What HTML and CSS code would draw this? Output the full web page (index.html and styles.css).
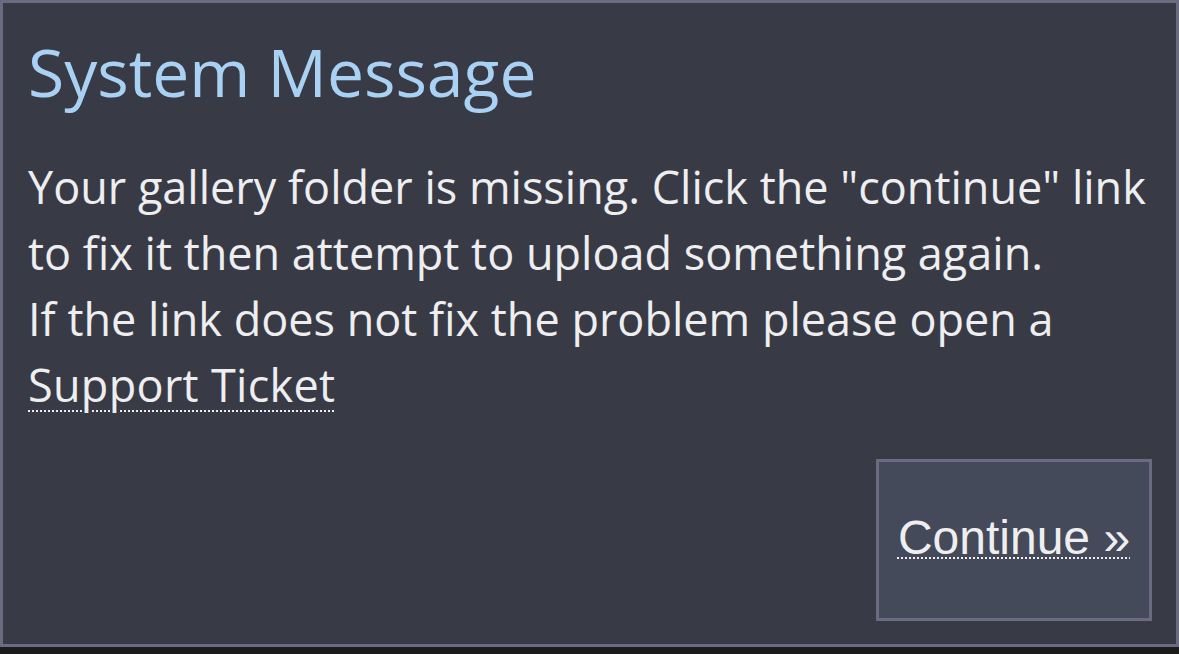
FILE: index.html
```html
<!DOCTYPE html>
<html lang="en">
<head>
<meta charset="utf-8">
<title>System Message</title>
<link rel="stylesheet" href="styles.css">
</head>
<body>
<div class="dialog">
  <h1 class="title">System Message</h1>
  <div class="message">
    Your gallery folder is missing. Click the "continue" link to fix it then attempt to upload something again.<br>
    If the link does not fix the problem please open a <a class="link" href="#">Support Ticket</a>
  </div>
  <div class="actions">
    <div class="button"><a class="button-link" href="#">Continue &raquo;</a></div>
  </div>
</div>
</body>
</html>
```
FILE: styles.css
```css
html, body {
  margin: 0;
  padding: 0;
  background: #1b1b1d;
}

.dialog {
  box-sizing: border-box;
  width: 1179px;
  height: 647px;
  border: 3px solid #6b6a81;
  background: #383b45;
  padding: 22px 24px 23px 25px;
  display: flex;
  flex-direction: column;
  font-family: "Open Sans", "Noto Sans", sans-serif;
  color: #eeeef0;
}

.title {
  margin: 0;
  font-weight: 400;
  font-size: 66px;
  line-height: 1.4;
  color: #a9d1f3;
}

.message {
  margin-top: 37px;
  font-size: 45px;
  line-height: 66px;
}

.link {
  color: #eeeef0;
  text-decoration: underline dotted 2px;
  text-underline-offset: 8px;
  letter-spacing: 0.3px;
}

.actions {
  margin-top: auto;
  display: flex;
  justify-content: flex-end;
}

.button {
  box-sizing: border-box;
  width: 276px;
  height: 162px;
  border: 3px solid #6b6a81;
  background: #444a59;
  display: flex;
  align-items: center;
  justify-content: center;
}

.button-link {
  font-family: "Liberation Sans", Arial, sans-serif;
  font-size: 48px;
  line-height: normal;
  color: #eeeef0;
  text-decoration: underline dotted 2px;
  text-underline-offset: 4px;
  margin-bottom: 6px;
}
```
